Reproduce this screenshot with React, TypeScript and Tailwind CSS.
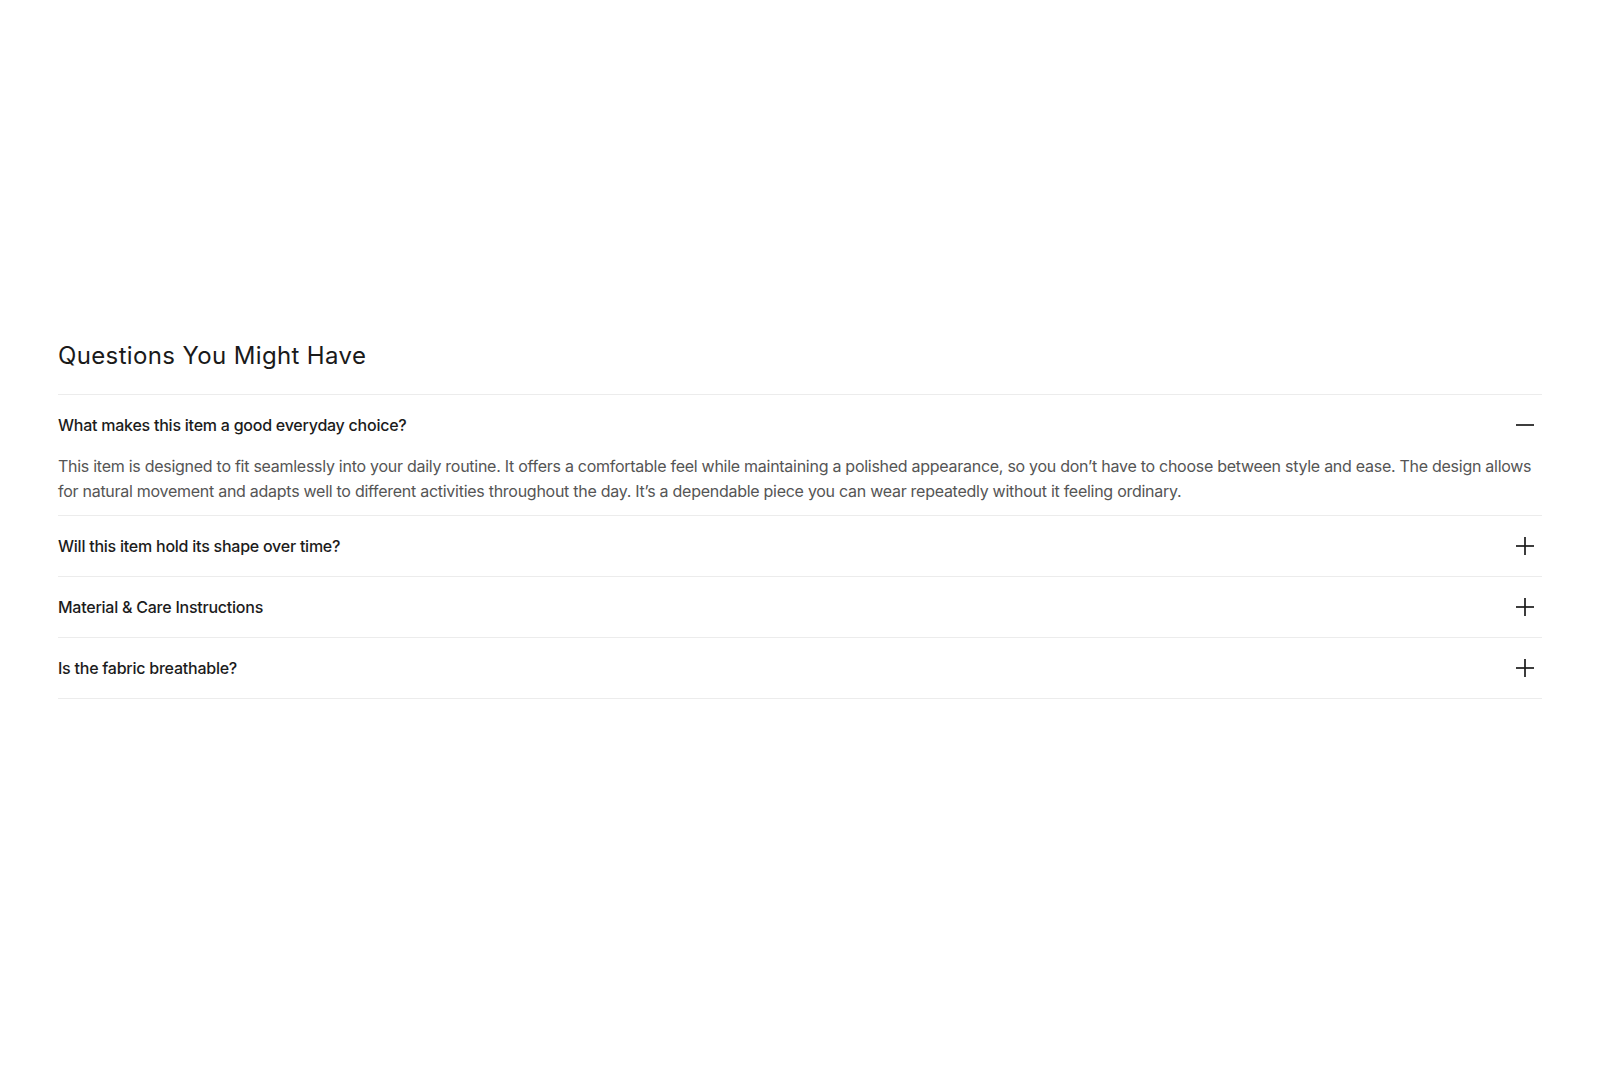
import { useState } from "react";

const faqs = [
  {
    q: "What makes this item a good everyday choice?",
    a: "This item is designed to fit seamlessly into your daily routine. It offers a comfortable feel while maintaining a polished appearance, so you don\u2019t have to choose between style and ease. The design allows for natural movement and adapts well to different activities throughout the day. It\u2019s a dependable piece you can wear repeatedly without it feeling ordinary.",
  },
  {
    q: "Will this item hold its shape over time?",
    a: "Yes. The fabric and construction are chosen to keep their structure through regular wear and washing.",
  },
  {
    q: "Material & Care Instructions",
    a: "Machine wash cold with like colours. Tumble dry low or lay flat to dry. Do not bleach.",
  },
  {
    q: "Is the fabric breathable?",
    a: "The fabric allows air to move freely, keeping you comfortable throughout the day.",
  },
];

const ToggleIcon = ({ open }: { open: boolean }) => (
  <svg width="20" height="20" viewBox="0 0 20 20" fill="none" stroke="#1a1a1a" strokeWidth="1.7">
    <line x1="1" y1="10" x2="19" y2="10" />
    {!open && <line x1="10" y1="1" x2="10" y2="19" />}
  </svg>
);

const App = () => {
  const [openIndex, setOpenIndex] = useState<number | null>(0);

  return (
    <div className="min-h-screen w-full bg-white font-['Inter',sans-serif]">
      <section className="px-[58px] pt-[340px] pb-[368px]">
        <h2 className="mb-[22px] text-2xl leading-8 font-normal tracking-[0.015em] text-[#1a1a1a]">
          Questions You Might Have
        </h2>
        <div className="border-b border-[#ececec]">
          {faqs.map((item, i) => {
            const open = openIndex === i;
            return (
              <div key={item.q} className="border-t border-[#ececec]">
                <button
                  className="flex w-full items-center justify-between py-5 text-left"
                  onClick={() => setOpenIndex(open ? null : i)}
                >
                  <span className="text-base leading-5 font-medium tracking-[-0.015em] text-[#1c1c1c]">
                    {item.q}
                  </span>
                  <span className="mr-[7px]">
                    <ToggleIcon open={open} />
                  </span>
                </button>
                {open && (
                  <p className="-mt-px pb-[11px] text-base leading-[25px] tracking-[-0.017em] text-[#555555]">
                    {item.a}
                  </p>
                )}
              </div>
            );
          })}
        </div>
      </section>
    </div>
  );
};

export default App;
